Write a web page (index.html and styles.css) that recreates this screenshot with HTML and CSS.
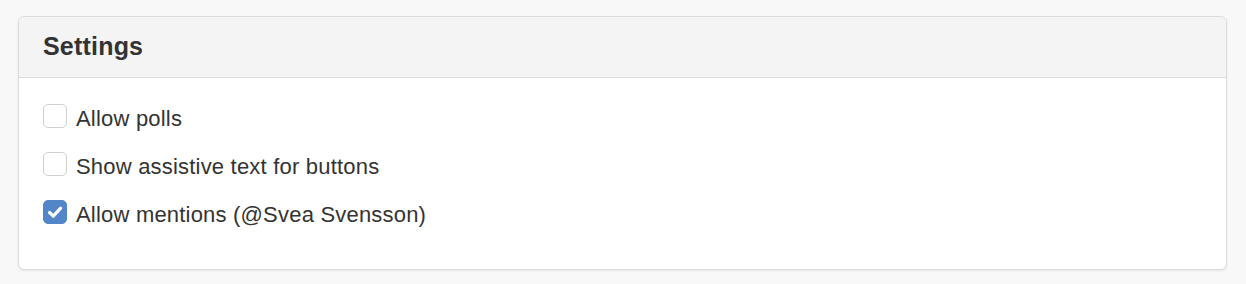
FILE: index.html
```html
<!DOCTYPE html>
<html>
<head>
<meta charset="utf-8">
<link rel="stylesheet" href="styles.css">
</head>
<body>
<div class="panel">
  <div class="panel-heading"><h3 class="panel-title">Settings</h3></div>
  <div class="panel-body">
    <label class="check-row"><span class="box"></span><span class="label-text">Allow polls</span></label>
    <label class="check-row"><span class="box"></span><span class="label-text">Show assistive text for buttons</span></label>
    <label class="check-row"><span class="box checked"><svg viewBox="0 0 24 24" width="24" height="24"><path d="M6.5 12.5 L10.3 16.2 L17.6 8.2" fill="none" stroke="#fff" stroke-width="3.2" stroke-linecap="round" stroke-linejoin="round"/></svg></span><span class="label-text">Allow mentions (@Svea Svensson)</span></label>
  </div>
</div>
</body>
</html>
```
FILE: styles.css
```css
html, body {
  margin: 0;
  padding: 0;
  background: #f8f8f8;
}
body {
  padding: 16px 19px 14px 18px;
  font-family: "Liberation Sans", Arial, sans-serif;
  color: #333;
}
.panel {
  background: #fff;
  border: 1px solid #dcdcdc;
  border-radius: 6px;
  box-shadow: 0 1px 2px rgba(0,0,0,0.08);
  overflow: hidden;
}
.panel-heading {
  background: #f4f4f4;
  border-bottom: 1px solid #dcdcdc;
  height: 60px;
  padding: 0 24px;
  display: flex;
  align-items: center;
}
.panel-title {
  margin: 0;
  font-size: 25px;
  font-weight: bold;
  line-height: 28px;
  letter-spacing: 0.2px;
  color: #333;
  position: relative;
  top: -1px;
}
.panel-body {
  padding: 26px 24px 45px;
  display: flex;
  flex-direction: column;
  gap: 24px;
}
.check-row {
  display: flex;
  align-items: center;
  height: 24px;
  gap: 9px;
}
.box {
  box-sizing: border-box;
  width: 24px;
  height: 24px;
  border: 1px solid #d0d0d0;
  border-radius: 5px;
  background: #fff;
  flex: none;
  display: block;
}
.box.checked {
  background: #5286c9;
  border-color: #5286c9;
}
.box svg {
  display: block;
  margin: -1px;
}
.label-text {
  font-size: 22px;
  line-height: 24px;
  letter-spacing: 0.2px;
  position: relative;
  top: 3px;
}
```
